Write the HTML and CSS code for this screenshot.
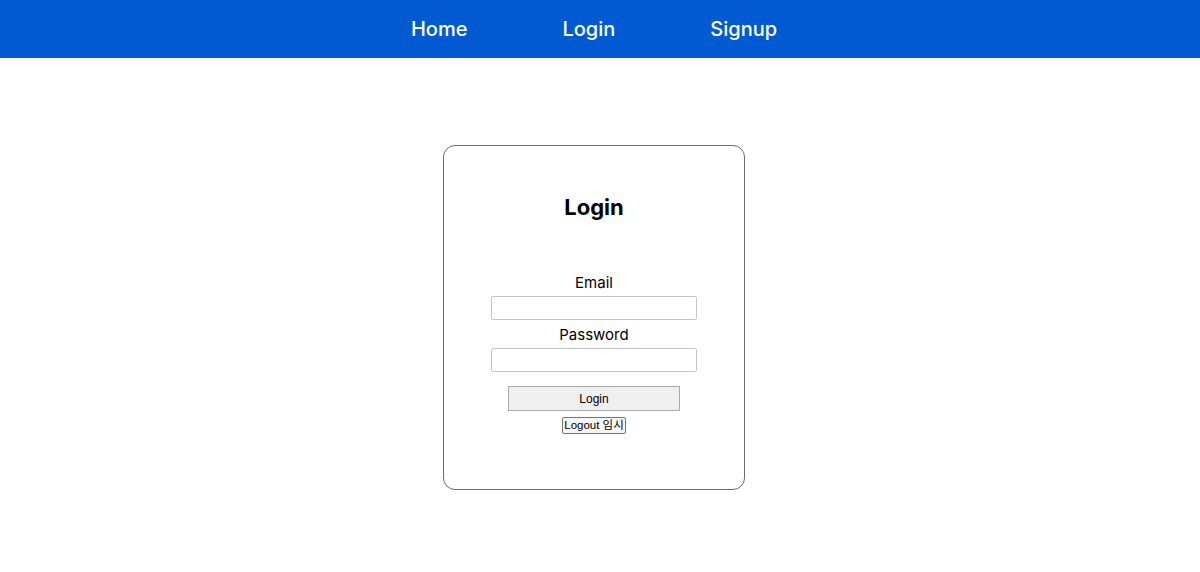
FILE: index.html
```html
<!DOCTYPE html>
<html lang="ko">
<head>
<meta charset="utf-8">
<title>Login</title>
<link rel="stylesheet" href="styles.css">
</head>
<body>
<nav class="nav">
  <a class="nav-link" href="#">Home</a>
  <a class="nav-link" href="#">Login</a>
  <a class="nav-link" href="#">Signup</a>
</nav>
<main class="main">
  <div class="card">
    <h2 class="title">Login</h2>
    <form class="form">
      <label class="label" for="email">Email</label>
      <input class="input" id="email" type="email">
      <label class="label" for="pw">Password</label>
      <input class="input" id="pw" type="password">
      <button class="submit" type="button">Login</button>
      <button class="logout" type="button">Logout 임시</button>
    </form>
  </div>
</main>
</body>
</html>
```
FILE: styles.css
```css
html, body {
  margin: 0;
  padding: 0;
  background: #fff;
  font-family: Inter, "Noto Sans CJK KR", sans-serif;
}
.nav {
  height: 58px;
  background: #005bd3;
  display: flex;
  justify-content: center;
  align-items: center;
  gap: 95px;
  padding-right: 12px;
}
.nav-link {
  color: #fff;
  text-decoration: none;
  font-size: 20px;
  font-weight: 500;
}
.main {
  display: flex;
  justify-content: center;
  padding-top: 87px;
  padding-right: 12px;
}
.card {
  width: 300px;
  height: 343px;
  border: 1px solid #6b6b6b;
  border-radius: 12px;
  display: flex;
  flex-direction: column;
  align-items: center;
}
.title {
  margin: 47px 0 0;
  font-size: 22px;
  font-weight: 700;
  line-height: 28px;
  color: #000;
}
.form {
  margin-top: 52px;
  display: flex;
  flex-direction: column;
  align-items: center;
}
.label {
  font-size: 15px;
  line-height: 20px;
  color: #000;
  margin-bottom: 3px;
}
.input {
  width: 206px;
  height: 24px;
  box-sizing: border-box;
  border: 1px solid #c4c4c4;
  border-radius: 2px;
  margin: 0 0 5px;
  padding: 0 4px;
}
.submit {
  margin-top: 9px;
  width: 172px;
  height: 25px;
  box-sizing: border-box;
  background: #efefef;
  border: 1px solid #a9a9a9;
  font-family: "Liberation Sans", Arial, sans-serif;
  font-size: 12px;
  color: #000;
  padding: 0;
}
.logout {
  margin-top: 6px;
  height: 17px;
  box-sizing: border-box;
  background: #f6f6f6;
  border: 1px solid #767676;
  border-radius: 2px;
  font-family: "Liberation Sans", "Noto Sans CJK KR", sans-serif;
  font-size: 11.5px;
  color: #000;
  padding: 0 1px;
  line-height: 13px;
}
```
